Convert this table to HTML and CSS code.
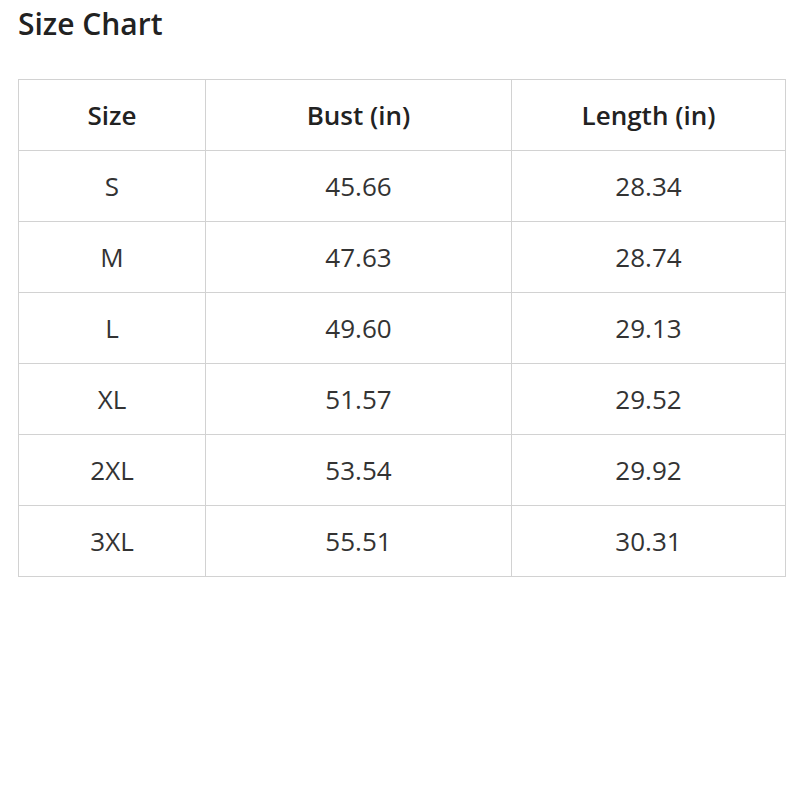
FILE: index.html
```html
<!DOCTYPE html>
<html>
<head>
<meta charset="utf-8">
<link rel="stylesheet" href="styles.css">
</head>
<body>
<div class="page">
  <h1 class="title">Size Chart</h1>
  <table class="chart">
    <colgroup>
      <col class="c1"><col class="c2"><col class="c3">
    </colgroup>
    <thead>
      <tr><th>Size</th><th>Bust (in)</th><th>Length (in)</th></tr>
    </thead>
    <tbody>
      <tr><td>S</td><td>45.66</td><td>28.34</td></tr>
      <tr><td>M</td><td>47.63</td><td>28.74</td></tr>
      <tr><td>L</td><td>49.60</td><td>29.13</td></tr>
      <tr><td>XL</td><td>51.57</td><td>29.52</td></tr>
      <tr><td>2XL</td><td>53.54</td><td>29.92</td></tr>
      <tr><td>3XL</td><td>55.51</td><td>30.31</td></tr>
    </tbody>
  </table>
</div>
</body>
</html>
```

FILE: styles.css
```css
html, body {
  margin: 0;
  padding: 0;
  background: #ffffff;
}
.page {
  padding: 4px 15px 0 18px;
  font-family: "Open Sans", "Liberation Sans", sans-serif;
  color: #333333;
}
.title {
  margin: 0 0 35px 0;
  font-size: 30px;
  line-height: 40px;
  font-weight: 600;
  color: #222222;
}
.chart {
  width: 767px;
  border-collapse: collapse;
  table-layout: fixed;
}
.c1 { width: 187px; }
.c2 { width: 306px; }
.c3 { width: 274px; }
.chart th, .chart td {
  border: 1.5px solid #d2d2d2;
  height: 70px;
  padding: 0;
  text-align: center;
  vertical-align: middle;
  font-size: 26px;
  line-height: 28px;
}
.chart th {
  font-weight: 600;
  color: #222222;
}
.chart td {
  font-weight: 400;
  color: #333333;
}
```
